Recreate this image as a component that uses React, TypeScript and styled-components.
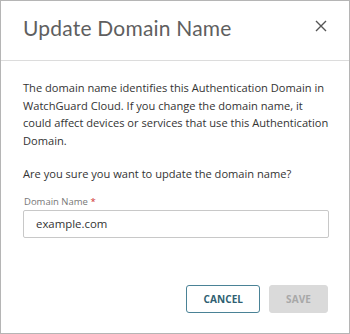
import styled, { createGlobalStyle } from "styled-components";

const GlobalStyle = createGlobalStyle`
  html, body {
    margin: 0;
    padding: 0;
    background: #fff;
  }
`;

export default function App() {
  return (
    <>
      <GlobalStyle />
      <Dialog>
        <Header>
          <Title>Update Domain Name</Title>
          <CloseButton aria-label="Close">
            <svg width="12" height="12" viewBox="0 0 12 12">
              <path d="M1 1 L11 11 M11 1 L1 11" stroke="#555" strokeWidth="1.4" />
            </svg>
          </CloseButton>
        </Header>
        <Body>
          <Paragraph>
            The domain name identifies this Authentication Domain in
            WatchGuard Cloud. If you change the domain name, it could affect
            devices or services that use this Authentication Domain.
          </Paragraph>
          <Paragraph>Are you sure you want to update the domain name?</Paragraph>
          <Field>
            <Label>
              Domain Name <Required>*</Required>
            </Label>
            <Input defaultValue="example.com" />
          </Field>
        </Body>
        <Footer>
          <Button>CANCEL</Button>
          <Button $disabled>SAVE</Button>
        </Footer>
      </Dialog>
    </>
  );
}

const Dialog = styled.div`
  width: 350px;
  height: 334px;
  box-sizing: border-box;
  border: 1px solid #b5b5b5;
  display: flex;
  flex-direction: column;
  font-family: "Open Sans", sans-serif;
`;

const Header = styled.div`
  height: 59px;
  border-bottom: 1px solid #dcdcdc;
  display: flex;
  align-items: flex-start;
  justify-content: space-between;
  padding: 0 20px 0 22px;
`;

const Title = styled.h2`
  margin: 14px 0 0;
  font-family: "Lato", sans-serif;
  font-weight: 400;
  font-size: 21px;
  color: #5f5f5f;
  letter-spacing: 0.2px;
`;

const CloseButton = styled.button`
  margin: 19px 2px 0 0;
  padding: 0;
  border: none;
  background: none;
  width: 12px;
  height: 12px;
  cursor: pointer;
  display: flex;
`;

const Body = styled.div`
  flex: 1;
  padding: 18px 20px 0 22px;
`;

const Paragraph = styled.p`
  margin: 0 0 15px;
  margin-right: -2px;
  font-size: 11.1px;
  line-height: 17.7px;
  color: #333;
`;

const Field = styled.div`
  display: flex;
  flex-direction: column;
  gap: 1px;
  margin-top: -3px;
`;

const Label = styled.label`
  font-size: 9.5px;
  line-height: 14px;
  color: #777;
  padding-left: 1px;
`;

const Required = styled.span`
  color: #d0302f;
`;

const Input = styled.input`
  box-sizing: border-box;
  width: 100%;
  height: 28px;
  border: 1px solid #c8c8c8;
  border-radius: 2px;
  padding: 0 12px;
  font-family: "Open Sans", sans-serif;
  font-size: 11.4px;
  color: #333;
  outline: none;
`;

const Footer = styled.div`
  display: flex;
  justify-content: flex-end;
  gap: 9px;
  padding: 0 21px 20px 0;
`;

const Button = styled.button<{ $disabled?: boolean }>`
  height: 28px;
  min-width: 58px;
  padding: 0 16px;
  border-radius: 3px;
  font-family: "Open Sans", sans-serif;
  font-weight: 700;
  font-size: 10px;
  letter-spacing: 0.1px;
  cursor: pointer;
  border: 1px solid ${(p) => (p.$disabled ? "#dadada" : "#4a8296")};
  background: ${(p) => (p.$disabled ? "#dadada" : "#fff")};
  color: ${(p) => (p.$disabled ? "#a8a8a8" : "#2f5f72")};
`;
